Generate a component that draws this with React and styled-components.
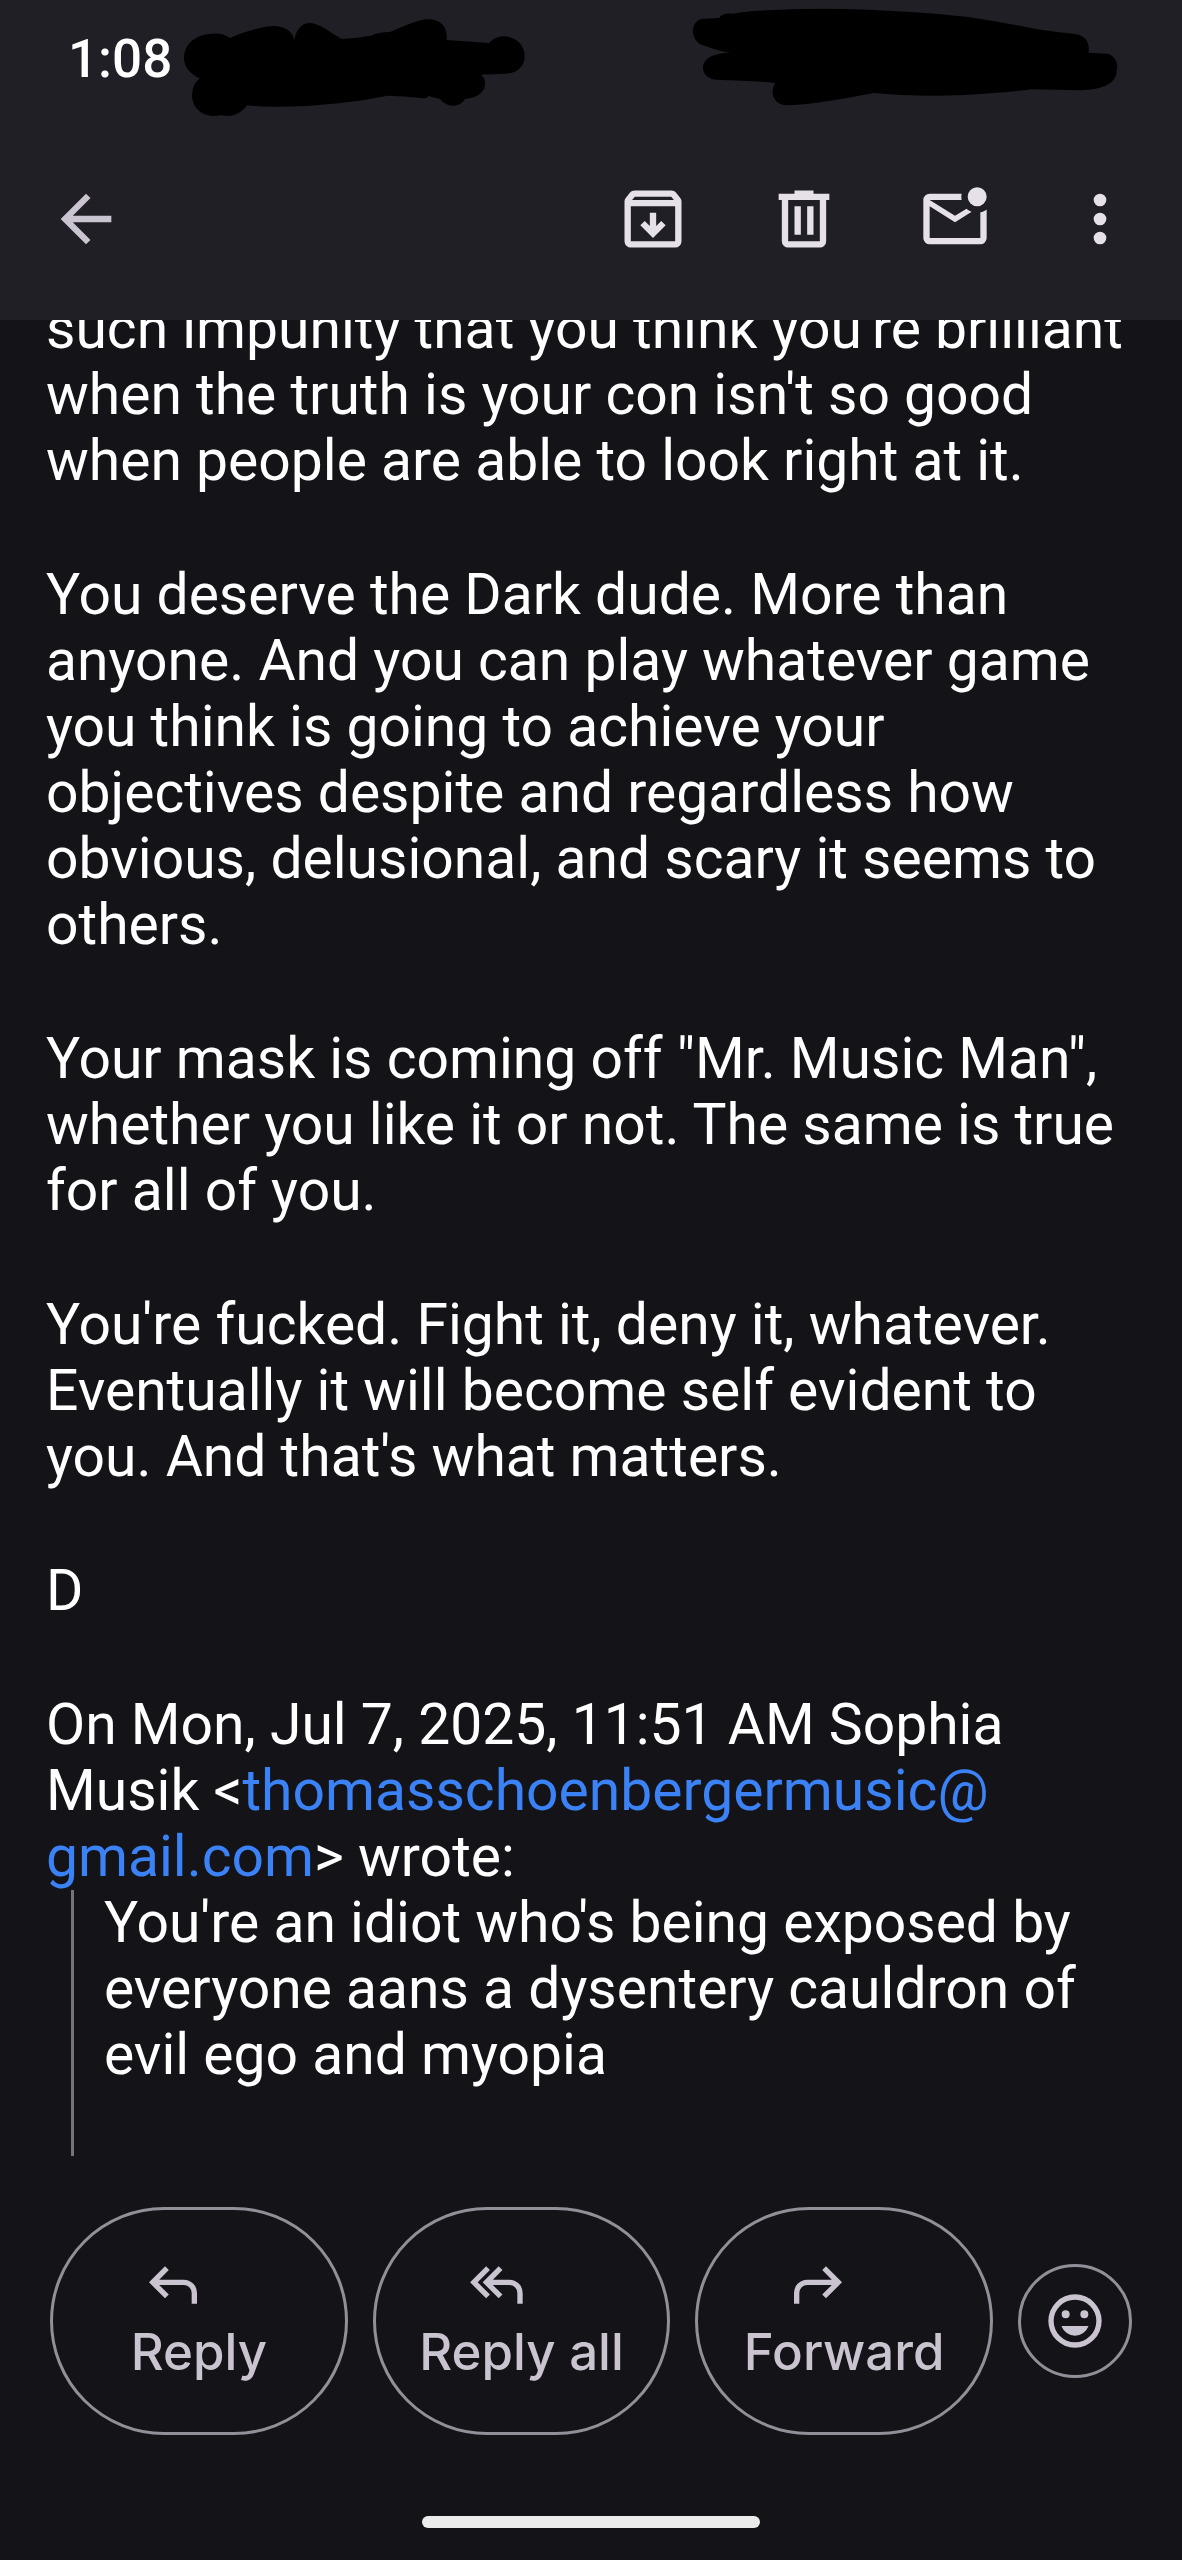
import React from "react";
import styled, { createGlobalStyle } from "styled-components";

const paragraphs = [
  "such impunity that you think you're brilliant when the truth is your con isn't so good when people are able to look right at it.",
  "You deserve the Dark dude. More than anyone. And you can play whatever game you think is going to achieve your objectives despite and regardless how obvious, delusional, and scary it seems to others.",
  "Your mask is coming off \"Mr. Music Man\", whether you like it or not. The same is true for all of you.",
  "You're fucked. Fight it, deny it, whatever. Eventually it will become self evident to you. And that's what matters.",
  "D",
];

// 24 unit icon outlines
const icons = {
  back: "M7.825 13l5.6 5.6L12 20l-8-8 8-8 1.425 1.4-5.6 5.6H20v2z",
  archive:
    "m12 18 4-4-1.4-1.4-1.6 1.6V10h-2v4.2l-1.6-1.6L8 14zM5 8v11h14V8zm0 13q-.825 0-1.413-.588T3 19V6.525q0-.35.113-.675t.337-.6L4.7 3.725q.275-.35.687-.538T6.25 3h11.5q.45 0 .863.188t.687.537l1.25 1.525q.225.275.338.6t.112.675V19q0 .825-.588 1.413T19 21zm.4-15h13.2l-.85-1H6.25z",
  trash:
    "M7 21q-.825 0-1.412-.587T5 19V6H4V4h5V3h6v1h5v2h-1v13q0 .825-.587 1.413T17 21zM17 6H7v13h10zM9 17h2V8H9zm4 0h2V8h-2z",
  unread:
    "M4 20q-.825 0-1.412-.587T2 18V6q0-.825.588-1.412T4 4h10.1q-.1.5-.1 1t.1 1H4l8 5 3.65-2.275q.35.325.763.563t.862.412L12 13 4 8v10h16V9.9q.575-.125 1.075-.35T22 9v9q0 .825-.587 1.413T20 20zM19 8q-1.25 0-2.125-.875T16 5t.875-2.125T19 2t2.125.875T22 5t-.875 2.125T19 8z",
  more: "M12 20a2 2 0 1 1 0-4 2 2 0 0 1 0 4zm0-6a2 2 0 1 1 0-4 2 2 0 0 1 0 4zm0-6a2 2 0 1 1 0-4 2 2 0 0 1 0 4z",
  reply:
    "M19 19v-4q0-1.25-.875-2.125T16 12H6.825l3.6 3.6L9 17l-6-6 6-6 1.425 1.4-3.6 3.6H16q2.075 0 3.538 1.463T21 15v4z",
  replyAll:
    "M8.3 17l-6-6 6-6 1.425 1.4L5.125 11l4.6 4.6zM20 19v-4q0-1.25-.875-2.125T17 12h-6.175l3.6 3.6L13 17l-6-6 6-6 1.425 1.4-3.6 3.6H17q2.075 0 3.538 1.463T22 15v4z",
  forward:
    "M5 19v-4q0-1.25.875-2.125T8 12h9.175l-3.6 3.6L15 17l6-6-6-6-1.425 1.4 3.6 3.6H8q-2.075 0-3.538 1.463T3 15v4z",
  smile:
    "M12 22a10 10 0 1 1 0-20 10 10 0 0 1 0 20zm0-2a8 8 0 1 0 0-16 8 8 0 0 0 0 16zM8.5 11a1.5 1.5 0 1 1 0-3 1.5 1.5 0 0 1 0 3zm7 0a1.5 1.5 0 1 1 0-3 1.5 1.5 0 0 1 0 3zM12 17.5q1.7 0 3.088-.962T17.1 13.9H6.9q.625 1.675 2.013 2.638T12 17.5z",
};

const Icon = ({ name, size, width = size, viewBox = "0 0 24 24" }) => (
  <svg
    width={width}
    height={size}
    viewBox={viewBox}
    fill="currentColor"
    aria-hidden="true"
  >
    <path d={icons[name]} />
  </svg>
);

export default function App() {
  return (
    <Page>
      <GlobalStyle />
      <Header>
        <StatusBar>
          <Clock>1:08</Clock>
          <svg width="342" height="118" viewBox="184 0 342 118" aria-hidden="true">
            <path d="M184 58C184 44 196 34 212 33.700Q223 33 230 38Q243 32 260 28C276 23 292 27 294.400 40C296 29 302 23 310 23C320 23 330 33 342 39Q358 38 371 35.700Q378 32 390 32Q408 24 418 21C432 16 449 21 446.600 40L489 43C493 39 498 36.300 504 36.300C516 36.300 524.700 45 524.700 56.700C524.700 66 517 73.700 505 73.700L481 74.700Q486 79 485 85C484 94 475 98 465 99C460 108 447 108 440 99Q434 98 429 96Q426 99 421 98Q404 96 387.500 95.700Q363 101 339 103.300Q307 107 275 106.700Q260 107 247 105.300C242 112 236 116 228 116Q224 116 220.500 115Q217 116 214 116C201 116 192 107 192 95Q192 85 199.700 78.300C190 74 184 67 184 58z" />
          </svg>
          <Spacer />
          <svg width="426" height="118" viewBox="692 0 426 118" aria-hidden="true">
            <path d="M692.800 32C693 24 697 18.700 704 18.700L719 18Q722 13 732 13.700Q742 12 753 11Q787 9 821 8.700Q870 9 915 12.300Q942 14 968 17Q1002 22 1035.700 29Q1056 32 1075 34C1087 36 1090 44 1088.500 52.700L1107 53.700C1115 55 1119 64 1116.500 71C1117 83 1103 90 1081 90.300L1032 89.300Q1012 92 990.500 93.300Q962 96 934 95.700Q904 96 873.700 93Q845 99 817 102.700Q800 105 787 105.300C775 105 769 95 775 83Q758 81 741.800 80.700L716 79.700C707 79 703 73 703 68C703 58 714 53 730.500 52.700Q721 51 717 50Q708 47 700 44.300Q694 40 692.800 32z" />
          </svg>
        </StatusBar>
        <Toolbar>
          <ToolButton $muted aria-label="Back">
            <Icon name="back" size={76} />
          </ToolButton>
          <Spacer />
          <ToolGroup>
            <ToolButton aria-label="Archive">
              <Icon name="archive" size={76} />
            </ToolButton>
            <ToolButton aria-label="Delete">
              <Icon name="trash" size={76} />
            </ToolButton>
            <ToolButton aria-label="Mark as unread">
              <Icon name="unread" size={76} />
            </ToolButton>
            <ToolButton aria-label="More options">
              <Icon name="more" size={76} width={64} viewBox="2 0 20 24" />
            </ToolButton>
          </ToolGroup>
        </Toolbar>
      </Header>

      <Main>
        <Message>
          {paragraphs.map((text) => (
            <p key={text}>{text}</p>
          ))}
          <p>
            On Mon, Jul 7, 2025, 11:51 AM Sophia Musik &lt;
            <MailLink href="mailto:thomasschoenbergermusic@gmail.com">
              thomasschoenbergermusic@
              <wbr />
              gmail.com
            </MailLink>
            &gt; wrote:
          </p>
          <Quote>
            You're an idiot who's being exposed by everyone aans a dysentery
            cauldron of evil ego and myopia
          </Quote>
        </Message>
      </Main>

      <Actions>
        <ActionButton>
          <Icon name="reply" size={64} />
          <span>Reply</span>
        </ActionButton>
        <ActionButton>
          <Icon name="replyAll" size={64} />
          <span>Reply all</span>
        </ActionButton>
        <ActionButton>
          <Icon name="forward" size={64} />
          <span>Forward</span>
        </ActionButton>
        <EmojiButton aria-label="Add reaction">
          <Icon name="smile" size={64} />
        </EmojiButton>
      </Actions>
      <NavBar>
        <NavHandle />
      </NavBar>
    </Page>
  );
}

const GlobalStyle = createGlobalStyle`
  * {
    box-sizing: border-box;
  }

  body {
    margin: 0;
    background-color: #141318;
  }

  button {
    margin: 0;
    padding: 0;
    border: none;
    background: none;
    font: inherit;
    cursor: pointer;
  }

  svg {
    display: block;
    flex-shrink: 0;
  }
`;

const Page = styled.div`
  min-height: 100vh;
  display: flex;
  flex-direction: column;
  background-color: #141318;
  color: #ffffff;
  font-family: Roboto, "Liberation Sans", sans-serif;
`;

const Header = styled.header`
  background-color: #211f26;
`;

const StatusBar = styled.div`
  display: flex;
  align-items: center;
  padding: 0 64px 0 68px;
`;

const Clock = styled.time`
  width: 116px;
  font-size: 53px;
  font-weight: 500;
  line-height: 62px;
`;

const Spacer = styled.div`
  flex: 1;
`;

const Toolbar = styled.div`
  display: flex;
  align-items: center;
  padding: 63px 50px 63px 48px;
`;

const ToolGroup = styled.div`
  display: flex;
  gap: 75px;
`;

const ToolButton = styled.button`
  color: ${({ $muted }) => ($muted ? "#cac4d0" : "#e6e0e9")};
`;

const Main = styled.main`
  flex: 1;
  overflow: hidden;
`;

// the message is scrolled, so its first line sits partly under the header
const Message = styled.article`
  margin-top: -24px;
  padding: 0 46px;
  font-size: 57px;
  line-height: 66px;

  p {
    margin: 0 0 68px;
  }

  p:last-of-type {
    margin-bottom: 0;
  }
`;

const MailLink = styled.a`
  color: #3b82f6;
  text-decoration: none;
`;

const Quote = styled.blockquote`
  margin: 0 0 0 25px;
  padding: 0 0 68px 30px;
  border-left: 3px solid #757478;
`;

const Actions = styled.div`
  display: flex;
  align-items: center;
  gap: 25px;
  padding: 0 50px;
`;

const ActionButton = styled.button`
  && {
    flex: 1;
    height: 228px;
    display: flex;
    flex-direction: column;
    justify-content: center;
    align-items: center;
    padding-bottom: 2px;
    border: 3px solid #938f99;
    border-radius: 114px;
    color: #cac4d0;
    font-family: Inter, Roboto, sans-serif;
    font-size: 51px;
    font-weight: 500;
    line-height: 70px;
  }

  svg {
    margin-right: 52px;
  }
`;

const EmojiButton = styled.button`
  && {
    width: 114px;
    height: 114px;
    display: flex;
    justify-content: center;
    align-items: center;
    border: 3px solid #938f99;
    border-radius: 50%;
    color: #cac4d0;
  }
`;

const NavBar = styled.div`
  display: flex;
  justify-content: center;
  padding: 81px 0 32px;
`;

const NavHandle = styled.div`
  width: 338px;
  height: 12px;
  border-radius: 6px;
  background-color: #ececec;
`;
